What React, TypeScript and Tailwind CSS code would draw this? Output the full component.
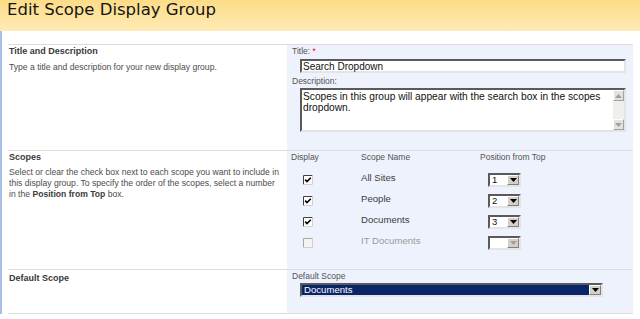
import React from "react";

const scopes = [
  { name: "All Sites", on: true, pos: "1" },
  { name: "People", on: true, pos: "2" },
  { name: "Documents", on: true, pos: "3" },
  { name: "IT Documents", on: false, pos: "" },
];

function Arrow({ dim }: { dim?: boolean }) {
  return (
    <svg width="7" height="4" viewBox="0 0 7 4">
      <path d="M0 0 H7 L3.5 4 Z" fill={dim ? "#a0a0a0" : "#000"} />
    </svg>
  );
}

function ArrowUp() {
  return (
    <svg width="7" height="4" viewBox="0 0 7 4">
      <path d="M0 4 H7 L3.5 0 Z" fill="#a0a0a0" />
    </svg>
  );
}

function DropBtn({ dim }: { dim?: boolean }) {
  return (
    <div className="flex h-full w-[12px] items-center justify-center border border-t-white border-l-white border-r-[#808080] border-b-[#808080] bg-[#d4d0c8]">
      <Arrow dim={dim} />
    </div>
  );
}

function CheckBox({ on, disabled }: { on: boolean; disabled?: boolean }) {
  return (
    <svg width="10" height="10" viewBox="0 0 10 10">
      <rect x="0" y="0" width="10" height="10" fill={disabled ? "#f4f4f4" : "#fff"} />
      <path d="M0.5 9.5 V0.5 H9.5" fill="none" stroke={disabled ? "#a8a8a8" : "#404040"} />
      <path d="M9.5 0.5 V9.5 H0.5" fill="none" stroke="#d4d0c8" />
      {on && (
        <path d="M2.2 4.6 L4 6.6 L7.8 2.8" fill="none" stroke="#000" strokeWidth="1.6" />
      )}
    </svg>
  );
}

export default function App() {
  return (
    <div className="h-[319px] w-[640px] overflow-hidden bg-white font-['Liberation_Sans',Arial,sans-serif]">
      {/* header */}
      <div className="h-[31px] bg-gradient-to-b from-[#fddc86] to-[#feebb6] pl-[7px]">
        <h1 className="font-['DejaVu_Sans',sans-serif] text-[16.5px] leading-[20px] text-[#141414]">
          Edit Scope Display Group
        </h1>
      </div>

      <div className="border-l-2 border-[#a8c0e8] pl-[6px] pr-[7px] pt-[13px]">
        {/* title & description */}
        <div className="flex h-[106px] border-t border-[#dcdcdc]">
          <div className="w-[279px] pl-[1px]">
            <div className="text-[9px] font-bold leading-[12px] text-[#3a3a3a]">Title and Description</div>
            <div className="mt-[4px] text-[8.6px] leading-[12px] text-[#4c4c4c]">
              Type a title and description for your new display group.
            </div>
          </div>
          <div className="flex-1 bg-[#eef2fd] pl-[5px]">
            <div className="text-[8.5px] leading-[12px] text-[#525252]">
              Title: <span className="text-[#ff0000]">*</span>
            </div>
            <div className="ml-[8px] mt-[2px] flex h-[14px] w-[326px] items-center border-2 border-t-[#5a5a5a] border-l-[#5a5a5a] border-b-[#e4e4e4] border-r-[#e4e4e4] bg-white pl-[1px] text-[10px] text-[#111]">
              Search Dropdown
            </div>
            <div className="mt-[2px] text-[8.5px] leading-[12px] text-[#525252]">Description:</div>
            <div className="ml-[8px] mt-[1px] flex h-[44px] w-[326px] border-2 border-t-[#5a5a5a] border-l-[#5a5a5a] border-b-[#e4e4e4] border-r-[#e4e4e4] bg-white">
              <div className="flex-1 pl-[1px] pr-[4px] pt-[1px] text-[10.2px] leading-[11px] text-[#111]">
                Scopes in this group will appear with the search box in the scopes dropdown.
              </div>
              <div className="flex w-[11px] flex-col justify-between bg-[#f0efeb]">
                <div className="flex h-[11px] items-center justify-center border border-t-white border-l-white border-r-[#a0a0a0] border-b-[#a0a0a0] bg-[#e4e2dc]">
                  <ArrowUp />
                </div>
                <div className="flex h-[11px] items-center justify-center border border-t-white border-l-white border-r-[#a0a0a0] border-b-[#a0a0a0] bg-[#e4e2dc]">
                  <Arrow dim />
                </div>
              </div>
            </div>
          </div>
        </div>

        {/* scopes */}
        <div className="flex h-[119px] border-t border-[#dcdcdc]">
          <div className="w-[279px] pl-[1px]">
            <div className="text-[9px] font-bold leading-[12px] text-[#3a3a3a]">Scopes</div>
            <div className="mt-[4px] pr-[4px] text-[8.6px] leading-[11px] text-[#4c4c4c]">
              <div>Select or clear the check box next to each scope you want to include in</div>
              <div>this display group. To specify the order of the scopes, select a number</div>
              <div>
                in the <span className="font-bold text-[#3a3a3a]">Position from Top</span> box.
              </div>
            </div>
          </div>
          <div className="flex-1 bg-[#eef2fd]">
            <div className="grid grid-cols-[74px_119px_1fr] text-[8.5px] leading-[12px] text-[#525252]">
              <div className="pl-[4px]">Display</div>
              <div>Scope Name</div>
              <div>Position from Top</div>
            </div>
            <div className="mt-[6px]">
              {scopes.map((s) => (
                <div key={s.name} className="grid h-[21px] grid-cols-[74px_119px_1fr] items-center">
                  <div className="pl-[16px] pt-[1px]">
                    <CheckBox on={s.on} disabled={!s.on} />
                  </div>
                  <div
                    className={`pb-[3px] text-[9.6px] leading-[12px] ${s.on ? "text-[#3c3c3c]" : "text-[#9a9a9a]"}`}
                  >
                    {s.name}
                  </div>
                  <div className="pl-[8px]">
                    <div className="flex h-[14px] w-[33px] border-2 border-t-[#5a5a5a] border-l-[#5a5a5a] border-b-[#e4e4e4] border-r-[#e4e4e4] bg-white">
                      <div className="flex-1 pl-[2px] text-[9.5px] leading-[10px] text-[#111]">{s.pos}</div>
                      <DropBtn dim={!s.on} />
                    </div>
                  </div>
                </div>
              ))}
            </div>
          </div>
        </div>

        {/* default scope */}
        <div className="flex h-[45px] border-y border-[#dcdcdc]">
          <div className="w-[279px] pl-[1px] pt-[2px]">
            <div className="text-[9px] font-bold leading-[12px] text-[#3a3a3a]">Default Scope</div>
          </div>
          <div className="flex-1 bg-[#eef2fd] pl-[5px]">
            <div className="text-[8.5px] leading-[12px] text-[#525252]">Default Scope</div>
            <div className="ml-[8px] mt-[1px] flex h-[14px] w-[303px] border-2 border-t-[#5a5a5a] border-l-[#5a5a5a] border-b-[#e4e4e4] border-r-[#e4e4e4] bg-white">
              <div className="flex-1 bg-[#0a246a] pl-[2px] text-[9.6px] leading-[10px] text-white">
                Documents
              </div>
              <DropBtn />
            </div>
          </div>
        </div>
      </div>
    </div>
  );
}
